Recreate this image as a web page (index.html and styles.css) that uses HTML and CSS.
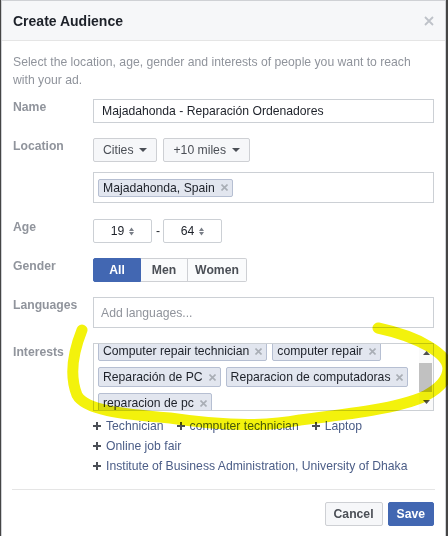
FILE: index.html
```html
<!DOCTYPE html>
<html>
<head>
<meta charset="utf-8">
<link rel="stylesheet" href="styles.css">
</head>
<body>
<div class="dialog">
  <div class="header">
    <h1 class="title">Create Audience</h1>
    <span class="close"><svg width="10" height="10" viewBox="0 0 10 10"><path d="M1 1L9 9M9 1L1 9" stroke="#bec2c9" stroke-width="1.8"/></svg></span>
  </div>
  <div class="content">
    <p class="desc">Select the location, age, gender and interests of people you want to reach<br>with your ad.</p>
    <div class="form">
      <div class="row">
        <div class="label">Name</div>
        <div class="field"><div class="input">Majadahonda - Reparación Ordenadores</div></div>
      </div>
      <div class="row">
        <div class="label">Location</div>
        <div class="field field-stack">
          <div class="btn-group">
            <span class="btn">Cities<i class="caret"></i></span>
            <span class="btn">+10 miles<i class="caret"></i></span>
          </div>
          <div class="input input-tall input-token"><span class="token token-sm">Majadahonda, Spain<svg class="x" width="7" height="7" viewBox="0 0 7 7"><path d="M0.5 0.5L6.5 6.5M6.5 0.5L0.5 6.5" stroke="#a9aeb5" stroke-width="1.6"/></svg></span></div>
        </div>
      </div>
      <div class="row row-age">
        <div class="label">Age</div>
        <div class="field age">
          <span class="spin">19<svg width="5" height="9" viewBox="0 0 5 9"><path d="M0 4L2.5 0.5L5 4ZM0 5L5 5L2.5 8.5Z" fill="#7a7f88"/></svg></span>
          <span class="dash">-</span>
          <span class="spin">64<svg width="5" height="9" viewBox="0 0 5 9"><path d="M0 4L2.5 0.5L5 4ZM0 5L5 5L2.5 8.5Z" fill="#7a7f88"/></svg></span>
        </div>
      </div>
      <div class="row">
        <div class="label">Gender</div>
        <div class="field">
          <div class="seg"><span class="on seg-all">All</span><span class="seg-men">Men</span><span class="seg-women">Women</span></div>
        </div>
      </div>
      <div class="row">
        <div class="label">Languages</div>
        <div class="field"><div class="input input-tall placeholder">Add languages...</div></div>
      </div>
      <div class="row">
        <div class="label label-int">Interests</div>
        <div class="field">
          <div class="ibox">
            <div class="itokens">
              <div class="itokens-inner">
                <span class="token">Computer repair technician<svg class="x" width="7" height="7" viewBox="0 0 7 7"><path d="M0.5 0.5L6.5 6.5M6.5 0.5L0.5 6.5" stroke="#a9aeb5" stroke-width="1.6"/></svg></span>
                <span class="token">computer repair<svg class="x" width="7" height="7" viewBox="0 0 7 7"><path d="M0.5 0.5L6.5 6.5M6.5 0.5L0.5 6.5" stroke="#a9aeb5" stroke-width="1.6"/></svg></span>
                <span class="token">Reparación de PC<svg class="x" width="7" height="7" viewBox="0 0 7 7"><path d="M0.5 0.5L6.5 6.5M6.5 0.5L0.5 6.5" stroke="#a9aeb5" stroke-width="1.6"/></svg></span>
                <span class="token">Reparacion de computadoras<svg class="x" width="7" height="7" viewBox="0 0 7 7"><path d="M0.5 0.5L6.5 6.5M6.5 0.5L0.5 6.5" stroke="#a9aeb5" stroke-width="1.6"/></svg></span>
                <span class="token">reparacion de pc<svg class="x" width="7" height="7" viewBox="0 0 7 7"><path d="M0.5 0.5L6.5 6.5M6.5 0.5L0.5 6.5" stroke="#a9aeb5" stroke-width="1.6"/></svg></span>
              </div>
            </div>
            <div class="sb">
              <div class="sb-btn"><svg width="7" height="4" viewBox="0 0 7 4"><path d="M0 4L3.5 0L7 4Z" fill="#505050"/></svg></div>
              <div class="sb-thumb"></div>
              <div class="sb-space"></div>
              <div class="sb-btn sb-down"><svg width="7" height="4" viewBox="0 0 7 4"><path d="M0 0L7 0L3.5 4Z" fill="#505050"/></svg></div>
            </div>
          </div>
        </div>
      </div>
    </div>
    <div class="sugg-wrap">
      <div class="sugg-line">
        <span class="sugg"><svg class="plus" width="8" height="8" viewBox="0 0 8 8"><path d="M4 0V8M0 4H8" stroke="#4b4f56" stroke-width="2"/></svg>Technician</span>
        <span class="sugg"><svg class="plus" width="8" height="8" viewBox="0 0 8 8"><path d="M4 0V8M0 4H8" stroke="#4b4f56" stroke-width="2"/></svg>computer technician</span>
        <span class="sugg"><svg class="plus" width="8" height="8" viewBox="0 0 8 8"><path d="M4 0V8M0 4H8" stroke="#4b4f56" stroke-width="2"/></svg>Laptop</span>
      </div>
      <div class="sugg-line">
        <span class="sugg"><svg class="plus" width="8" height="8" viewBox="0 0 8 8"><path d="M4 0V8M0 4H8" stroke="#4b4f56" stroke-width="2"/></svg>Online job fair</span>
      </div>
      <div class="sugg-line">
        <span class="sugg"><svg class="plus" width="8" height="8" viewBox="0 0 8 8"><path d="M4 0V8M0 4H8" stroke="#4b4f56" stroke-width="2"/></svg>Institute of Business Administration, University of Dhaka</span>
      </div>
    </div>
  </div>
  <div class="footer">
    <div class="divider"></div>
    <div class="footer-btns">
      <span class="fbtn">Cancel</span>
      <span class="fbtn primary">Save</span>
    </div>
  </div>
</div>
<svg class="highlight" width="448" height="536" viewBox="0 0 448 536">
  <path d="M82 330 C74 350, 69 375, 77 395 C85 410, 120 414, 170 418 C210 424, 260 428, 300 420 C350 414, 400 408, 425 396 C440 388, 448 378, 448 368 C447 354, 420 337, 378 328" fill="none" stroke="#f3f20c" stroke-width="11" stroke-linecap="round" stroke-linejoin="round"/>
</svg>
</body>
</html>
```

FILE: styles.css
```css
* { box-sizing: border-box; }
html, body { margin: 0; padding: 0; }
body {
  width: 448px;
  height: 536px;
  overflow: hidden;
  position: relative;
  background: #454545;
  font-family: "Liberation Sans", Arial, sans-serif;
  font-size: 12.2px;
  color: #1d2129;
}
.dialog {
  margin-left: 1px;
  width: 445px;
  height: 536px;
  background: #fff;
  border-left: 1px solid #cfd1d5;
  border-right: 1px solid #cfd1d5;
  border-top: 1px solid #cfd1d5;
}
.header {
  height: 40px;
  background: #f6f7f9;
  border-bottom: 1px solid #e5e5e5;
  display: flex;
  align-items: center;
  justify-content: space-between;
  padding: 0 11px 0 11px;
}
.title {
  margin: 0;
  font-size: 14px;
  font-weight: bold;
  color: #1d2129;
}
.close { display: flex; }
.content { padding: 12px 11px 0 11px; }
.desc {
  margin: 0;
  line-height: 18px;
  color: #90949c;
}
.form {
  margin-top: 10px;
  display: flex;
  flex-direction: column;
  gap: 15px;
}
.row { display: flex; }
.row-age { margin-top: 1px; }
.label {
  width: 80px;
  flex: none;
  font-weight: bold;
  color: #90949c;
  line-height: 16px;
}
.label-int { padding-top: 1px; }
.field { flex: 1; min-width: 0; }
.field-stack {
  display: flex;
  flex-direction: column;
  gap: 10px;
}
.input {
  height: 24px;
  border: 1px solid #ccd0d5;
  padding: 0 8px;
  display: flex;
  align-items: center;
  color: #1d2129;
}
.input-tall { height: 31px; }
.input-token { padding: 0 4px; }
.placeholder { color: #90949c; padding: 0 7px; }
.btn-group { display: flex; gap: 6px; }
.btn {
  display: inline-flex;
  align-items: center;
  gap: 6px;
  height: 24px;
  padding: 0 9px;
  border: 1px solid #ced0d4;
  border-radius: 2px;
  background: #f6f7f9;
  color: #4b4f56;
}
.caret {
  width: 0;
  height: 0;
  border-left: 4px solid transparent;
  border-right: 4px solid transparent;
  border-top: 4px solid #4b4f56;
}
.token {
  display: inline-flex;
  align-items: center;
  height: 20px;
  padding: 0 4px 0 4px;
  background: #e2e6ef;
  border: 1px solid #b6bfd2;
  border-radius: 2px;
  color: #1d2129;
  white-space: nowrap;
}
.token-sm { height: 18px; }
.token .x { margin-left: 6px; }
.age { display: flex; align-items: center; gap: 4px; }
.spin {
  width: 59px;
  height: 24px;
  border: 1px solid #ccd0d5;
  border-radius: 2px;
  display: flex;
  align-items: center;
  justify-content: center;
  gap: 5px;
  color: #1d2129;
}
.dash { color: #1d2129; width: 3px; }
.seg { display: flex; height: 24px; }
.seg span {
  display: flex;
  align-items: center;
  justify-content: center;
  border: 1px solid #ced0d4;
  border-left: none;
  background: #fafbfc;
  font-weight: bold;
  color: #4b4f56;
}
.seg .on {
  background: #4267b2;
  border: 1px solid #4267b2;
  color: #fff;
  border-radius: 2px 0 0 2px;
}
.seg-all { width: 48px; }
.seg-men { width: 47px; }
.seg-women { width: 59px; border-radius: 0 2px 2px 0; }
.ibox {
  height: 68px;
  border: 1px solid #ccd0d5;
  display: flex;
}
.itokens {
  flex: 1;
  overflow: hidden;
  padding-left: 4px;
}
.itokens-inner {
  display: flex;
  flex-wrap: wrap;
  gap: 6px 5px;
  margin-top: -3px;
}
.sb {
  width: 14px;
  flex: none;
  display: flex;
  flex-direction: column;
  background: #fafafa;
}
.sb-btn {
  height: 17px;
  display: flex;
  align-items: center;
  justify-content: center;
}
.sb-down { height: 16px; }
.sb-thumb {
  margin: 2px 1px 0 0;
  height: 29px;
  background: #c1c1c1;
}
.sb-space { flex: 1; }
.sugg-wrap {
  margin-top: 5px;
  padding-left: 80px;
  line-height: 20px;
}
.sugg-line { display: flex; }
.sugg {
  display: inline-flex;
  align-items: center;
  margin-right: 13px;
  color: #4b5d87;
  white-space: nowrap;
}
.plus { margin-right: 5px; flex: none; }
.footer { padding: 0 10px; }
.divider {
  margin-top: 13px;
  height: 1px;
  background: #e5e5e5;
}
.footer-btns {
  margin-top: 12px;
  padding-right: 1px;
  display: flex;
  justify-content: flex-end;
  gap: 5px;
}
.fbtn {
  height: 24px;
  padding: 0 8px;
  display: flex;
  align-items: center;
  border: 1px solid #ced0d4;
  border-radius: 2px;
  background: #f6f7f9;
  color: #4b4f56;
  font-weight: bold;
}
.fbtn.primary {
  background: #4267b2;
  border-color: #4267b2;
  color: #fff;
}
.highlight {
  position: absolute;
  top: 0;
  left: 0;
  pointer-events: none;
  mix-blend-mode: multiply;
}
```
